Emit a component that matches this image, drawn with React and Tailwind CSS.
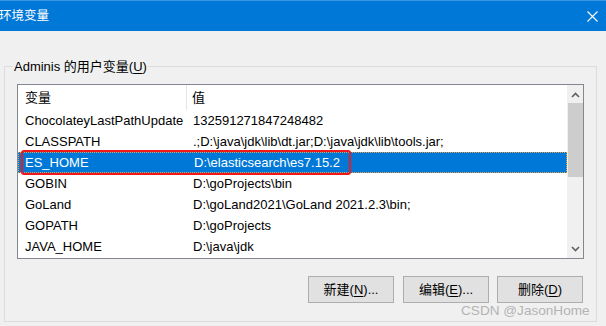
import React from "react";

const rows = [
  ["ChocolateyLastPathUpdate", "132591271847248482"],
  ["CLASSPATH", ".;D:\\java\\jdk\\lib\\dt.jar;D:\\java\\jdk\\lib\\tools.jar;"],
  ["ES_HOME", "D:\\elasticsearch\\es7.15.2"],
  ["GOBIN", "D:\\goProjects\\bin"],
  ["GoLand", "D:\\goLand2021\\GoLand 2021.2.3\\bin;"],
  ["GOPATH", "D:\\goProjects"],
  ["JAVA_HOME", "D:\\java\\jdk"],
];

const font = { fontFamily: '"Liberation Sans", "Noto Sans CJK SC", sans-serif' };

function Btn({ label, u, tail }) {
  return (
    <div className="w-[86px] h-[27px] border border-[#adadad] bg-[#e1e1e1] flex items-center justify-center text-[13px] text-black">
      <span>{label}(</span>
      <span className="underline underline-offset-2">{u}</span>
      <span>){tail}</span>
    </div>
  );
}

export default function App() {
  return (
    <div
      className="w-[606px] h-[326px] bg-[#f0f0f0] flex flex-col overflow-hidden relative"
      style={font}
    >
      {/* title bar */}
      <div className="h-[31px] bg-[#0078d7] border-t border-[#3b95e0] flex items-center justify-between shrink-0">
        <span className="text-white text-[12.5px] pl-0 -ml-[1px] leading-none">环境变量</span>
        <svg width="11" height="11" viewBox="0 0 11 11" className="mr-[8px] mt-[0px]">
          <path d="M0.5 0.5 L10.5 10.5 M10.5 0.5 L0.5 10.5" stroke="white" strokeWidth="1.1" />
        </svg>
      </div>

      {/* group box */}
      <div className="relative ml-[4px] mt-[35px] w-[593px] h-[256px] border border-[#dcdcdc]">
        <div className="absolute left-[8px] -top-[9px] px-[1px] bg-[#f0f0f0] text-[13px] leading-[17px] text-black">
          Adminis 的用户变量(<span className="underline underline-offset-2">U</span>)
        </div>

        {/* list box */}
        <div className="ml-[12px] mt-[17px] w-[567px] h-[175px] border border-[#828790] bg-white flex text-[13px] text-black">
          <div className="flex-1 flex flex-col">
            <div className="h-[25px] flex items-center">
              <div className="w-[169px] h-full pl-[7px] flex items-center border-r border-[#e5e5e5]">变量</div>
              <div className="pl-[5px]">值</div>
            </div>
            {rows.map(([k, v], i) => {
              const sel = i === 2;
              return (
                <div
                  key={k}
                  className={
                    sel
                      ? "relative h-[21px] flex items-center bg-[#0078d7] text-white border border-dotted border-[#f0a040]"
                      : "h-[21px] flex items-center"
                  }
                >
                  <div className={sel ? "w-[169px] pl-[6px]" : "w-[169px] pl-[7px]"}>{k}</div>
                  <div className={sel ? "pl-[6px]" : "pl-[6px]"}>{v}</div>
                  {sel && (
                    <div className="absolute left-[2px] -top-[3px] w-[330px] h-[25px] border-2 border-[#f01818] rounded-[3px]" />
                  )}
                </div>
              );
            })}
          </div>
          {/* scrollbar */}
          <div className="w-[16px] bg-[#f0f0f0] flex flex-col items-center">
            <div className="h-[17px] w-full flex items-center justify-center mt-[1px]">
              <svg width="9" height="6" viewBox="0 0 9 6">
                <path d="M1 5 L4.5 1.5 L8 5" stroke="#606060" strokeWidth="1.6" fill="none" />
              </svg>
            </div>
            <div className="w-[15px] h-[74px] bg-[#cdcdcd]" />
            <div className="flex-1" />
            <div className="h-[17px] w-full flex items-center justify-center mb-[1px]">
              <svg width="9" height="6" viewBox="0 0 9 6">
                <path d="M1 1 L4.5 4.5 L8 1" stroke="#606060" strokeWidth="1.6" fill="none" />
              </svg>
            </div>
          </div>
        </div>

        {/* buttons */}
        <div className="mt-[17px] ml-[303px] flex">
          <Btn label="新建" u="N" tail="..." />
          <div className="ml-[9px]">
            <Btn label="编辑" u="E" tail="..." />
          </div>
          <div className="ml-[8px]">
            <Btn label="删除" u="D" tail="" />
          </div>
        </div>
      </div>

      {/* watermark */}
      <div className="absolute left-[461px] top-[302px] text-[13.6px] text-[#b4b4b4] leading-[18px]" style={{ fontFamily: '"Liberation Sans", sans-serif' }}>
        CSDN @JasonHome
      </div>
    </div>
  );
}
